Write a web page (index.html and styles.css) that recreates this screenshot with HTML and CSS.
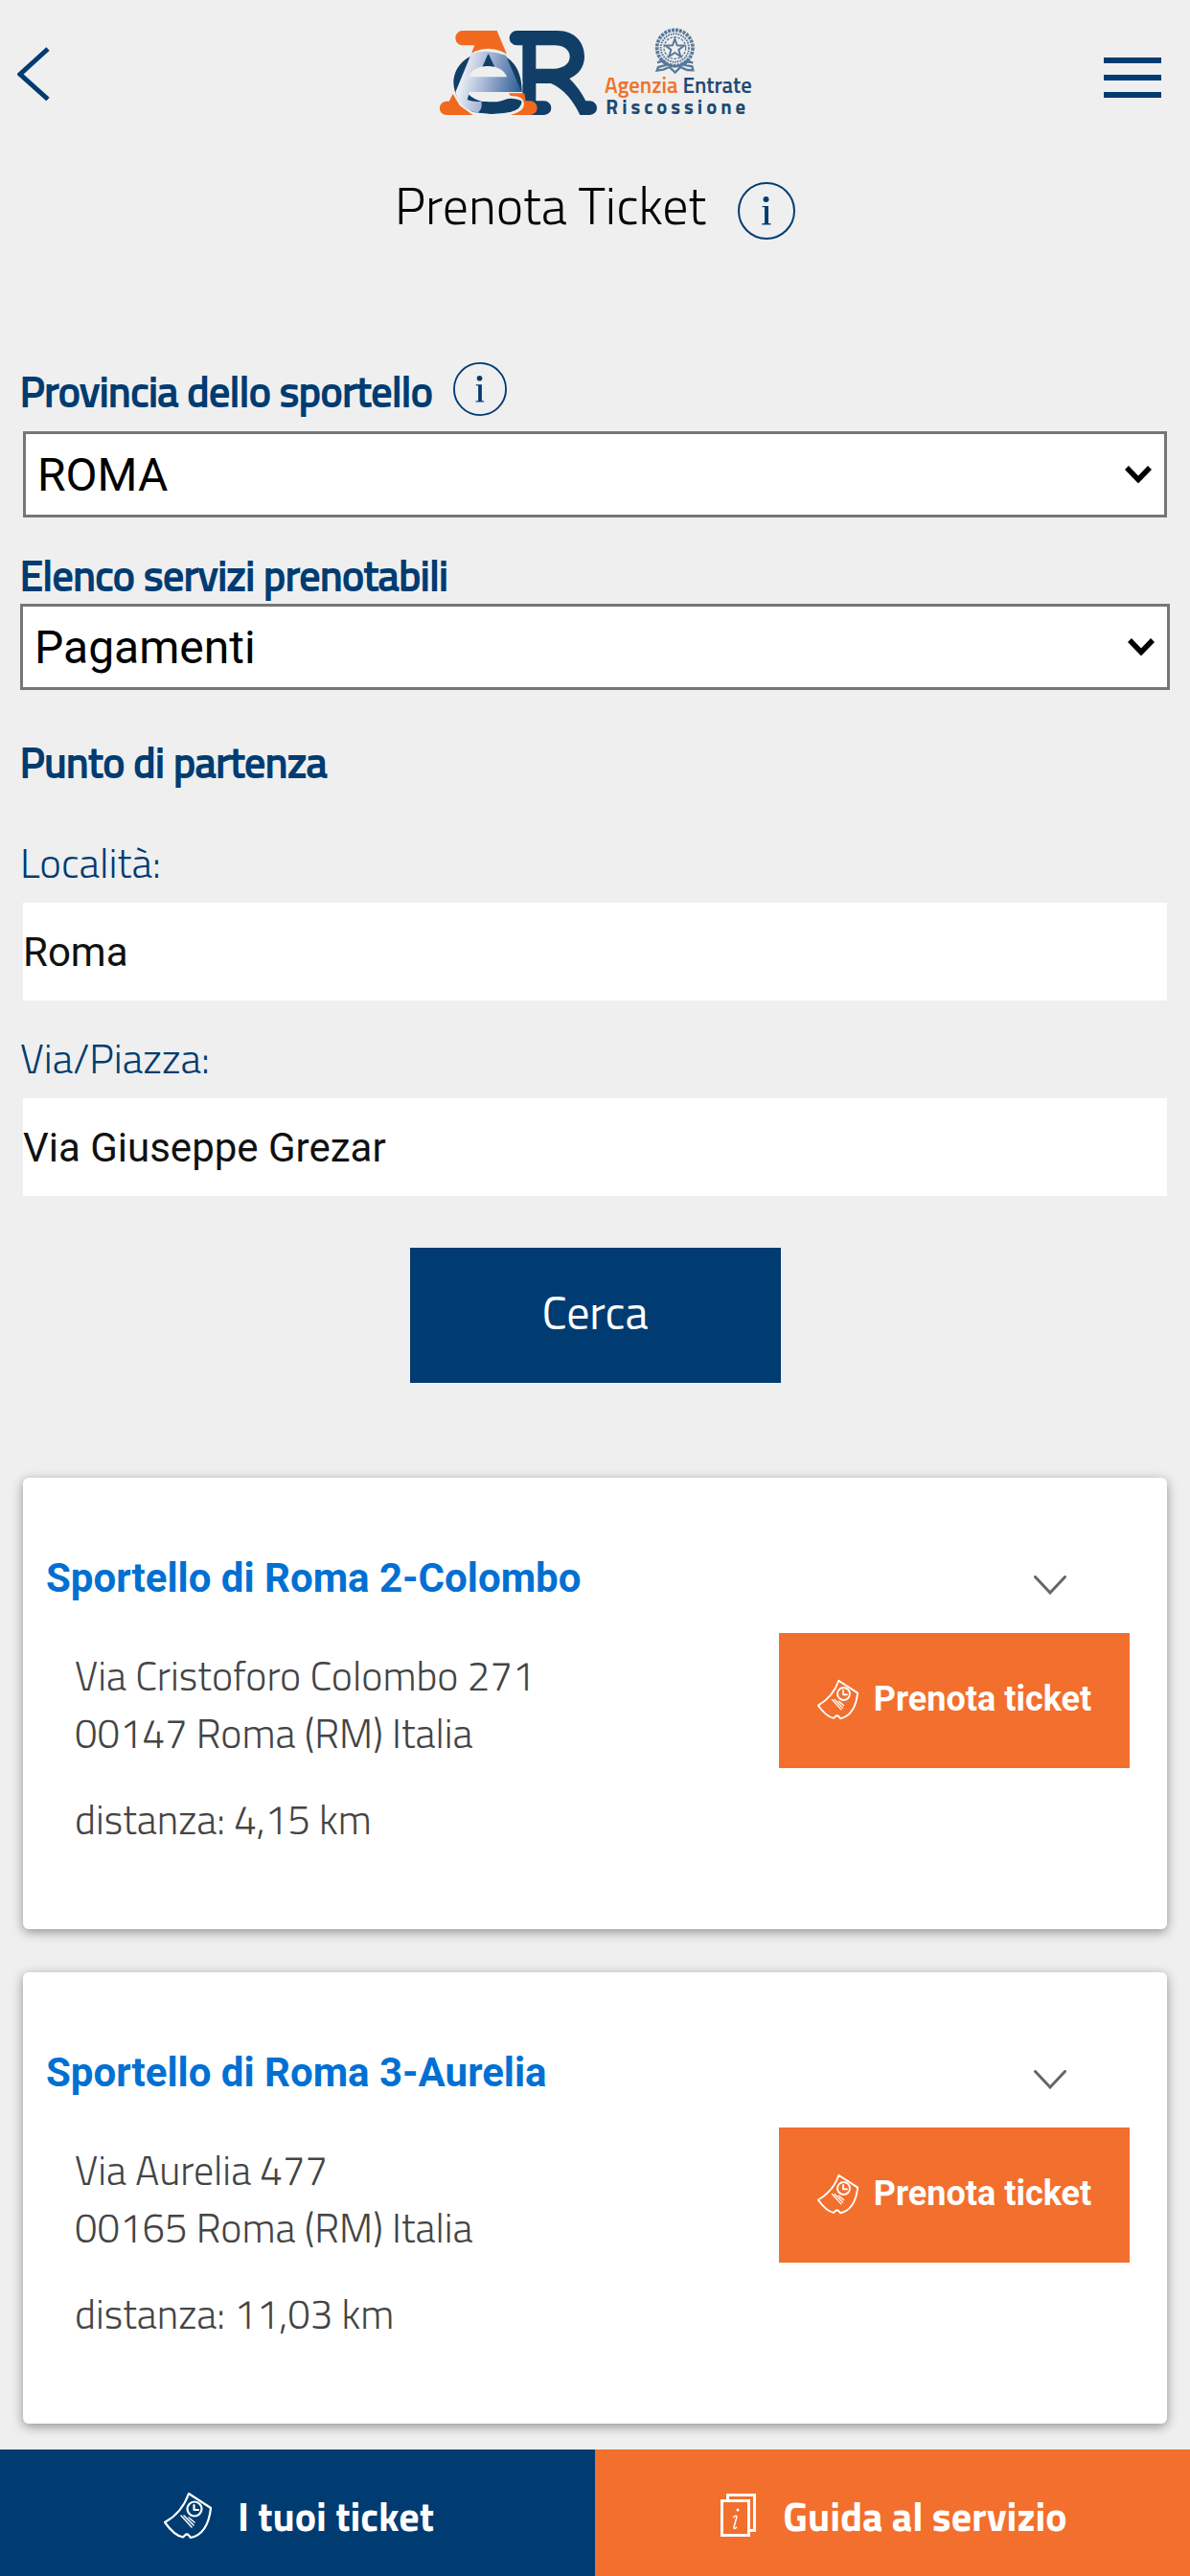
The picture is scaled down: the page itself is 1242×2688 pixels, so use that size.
FILE: index.html
```html
<!DOCTYPE html>
<html lang="it">
<head>
  <meta charset="UTF-8" />
  <meta name="viewport" content="width=device-width, initial-scale=1.0" />
  <title>Prenota Ticket</title>
  <link rel="stylesheet" href="styles.css">
</head>
<body>
  <!-- shared icons -->
  <svg class="sprite" aria-hidden="true">
    <symbol id="icon-info" viewBox="0 0 60 60">
      <circle cx="30" cy="30" r="29" fill="none" stroke="currentColor" stroke-width="2"/>
      <circle cx="29.5" cy="18" r="3" fill="currentColor"/>
      <path d="M25.5 25H32V43L34.5 43.3V44.5H25.2V43.3L28 43V26.3L25.5 26Z" fill="currentColor"/>
    </symbol>
    <symbol id="icon-ticket" viewBox="0 0 50 50">
      <g fill="none" stroke="currentColor" stroke-width="2.200" stroke-linejoin="round" stroke-linecap="round">
        <path d="M26 2L49 17Q46 44 28 48L26 45.500Q24 43.500 22 45.500L20 47.500Q11 46 1 32Q19 22 26 2Z"/>
        <circle cx="32" cy="18" r="7.500"/>
        <path d="M31.500 14V19H36"/>
        <path d="M18 25L29 37M21 25L31 35M26 27L32 32" stroke-width="1.500"/>
      </g>
    </symbol>
    <symbol id="icon-arrow" viewBox="0 0 28 18">
      <path d="M2 2L14 14.500L26 2" fill="none" stroke="currentColor" stroke-width="5.500"/>
    </symbol>
    <symbol id="icon-chevron" viewBox="0 0 34 20">
      <path d="M1.500 1.500L17 18L32.500 1.500" fill="none" stroke="currentColor" stroke-width="3" stroke-linecap="round"/>
    </symbol>
  </svg>

  <header class="top-bar">
    <a href="#" class="back-link" aria-label="Indietro">
      <svg width="34" height="60" viewBox="0 0 34 60">
        <path d="M32 6L3 32.500L32 58.500" fill="none" stroke="currentColor" stroke-width="5"/>
      </svg>
    </a>
    <svg class="logo" viewBox="57 60 972 270" role="img" aria-label="Agenzia Entrate Riscossione">
      <defs>
        <linearGradient id="logoShade" x1="0" y1="0.300" x2="1" y2="0.500">
          <stop offset="0" stop-color="#ffffff"/>
          <stop offset="0.450" stop-color="#a9b8d8"/>
          <stop offset="1" stop-color="#2f6094"/>
        </linearGradient>
      </defs>
      <!-- orange A -->
      <path d="M128 66H236L267 140Q210 112 156 137L166 112H128A22 23 0 0 1 128 66Z" fill="#f0691e"/>
      <path d="M98 264L119 300L160 330H78A21 21 0 0 1 78 287H86Z" fill="#f0691e"/>
      <!-- blue R -->
      <path d="M298 66H425C482 66 510 105 510 147C510 181 490 204 463 216Q494 246 514 286H527A22 22 0 0 1 527 330H496C475 285 447 250 405 231H358V286H384A22 22 0 0 1 384 330H330L316 290V112H298A23 23 0 0 1 298 66ZM358 112V185H418C446 182 464 170 464 147C464 126 445 112 416 112Z" fill="#103e67"/>
      <!-- e in the middle -->
      <circle cx="209" cy="229" r="107" fill="#efefef"/>
      <path d="M314 258H146Q142 286 189 287Q220 290 250 283Q286 272 314 286Q314 312 278 321Q213 333 160 320Q102 288 100 228C101 175 145 134 209 134C272 134 316 178 314 258Z" fill="#103e67"/>
      <path d="M156 137Q205 123 264 143L313 258H145L151 268Q151 280 187 286Q193 313 174 324Q118 310 106 259Z" fill="url(#logoShade)"/>
      <path d="M190 180L209 137L229 180Z" fill="#103e67"/>
      <path d="M148 211Q160 178 207 177Q254 178 267 211Z" fill="#efefef"/>
      <path d="M152 259H274V275Q252 289 222 289Q180 290 152 270Z" fill="#efefef"/>
      <path d="M148 266L143 282Q162 290 187 287Q164 281 148 266Z" fill="#103e67"/>
      <path d="M273 262H322L326 286H340A22 22 0 0 1 340 330H278Q325 316 318 291Q312 275 290 275Q278 273 273 262Z" fill="#f0691e"/>
      <path d="M273 273Q314 270 318 292Q320 318 278 325Q224 334 174 325" fill="none" stroke="#efefef" stroke-width="5"/>
      <!-- emblem -->
      <g fill="none" stroke="#58799a" stroke-width="5">
        <circle cx="793" cy="120" r="56" stroke-width="11" stroke-dasharray="9 3"/>
        <circle cx="793" cy="120" r="44" stroke-width="6" stroke-dasharray="5 3"/>
        <circle cx="793" cy="120" r="34" stroke-width="4" stroke-dasharray="8 4"/>
        <path d="M793 92L800 112L822 113L805 126L811 147L793 135L775 147L781 126L764 113L786 112Z" stroke-width="6"/>
        <path d="M738 166L756 160L764 174L741 180L737 191L757 188L776 180L794 197L811 180L831 189L850 190L847 178L824 174L832 161L850 167M758 160Q776 180 793 177Q811 180 829 160" stroke-width="7"/>
      </g>
      <text class="logo-name" x="573" y="262"><tspan class="logo-accent">Agenzia</tspan> Entrate</text>
      <text class="logo-sub" x="577" y="327">Riscossione</text>
    </svg>
    <button type="button" class="menu-button" aria-label="Menu">
      <svg width="60" height="54" viewBox="0 0 60 54">
        <path d="M0 12H60V18H0ZM0 30H60V36H0ZM0 48H60V54H0Z" fill="currentColor"/>
      </svg>
    </button>
  </header>

  <main>
    <div class="page-title">
      <h1>Prenota Ticket</h1>
      <button type="button" class="info-button" aria-label="Informazioni">
        <svg width="60" height="60"><use href="#icon-info"/></svg>
      </button>
    </div>

    <form class="search-form">
      <div class="label-row">
        <label class="heading" for="provincia">Provincia dello sportello</label>
        <button type="button" class="info-button" aria-label="Informazioni provincia">
          <svg width="56" height="56"><use href="#icon-info"/></svg>
        </button>
      </div>
      <div class="select-box inset">
        <select id="provincia">
          <option>ROMA</option>
        </select>
        <svg class="arrow" width="28" height="18"><use href="#icon-arrow"/></svg>
      </div>

      <label class="heading services-label" for="servizi">Elenco servizi prenotabili</label>
      <div class="select-box">
        <select id="servizi">
          <option>Pagamenti</option>
        </select>
        <svg class="arrow" width="28" height="18"><use href="#icon-arrow"/></svg>
      </div>

      <h2 class="heading start-heading">Punto di partenza</h2>

      <div class="input-group">
        <label for="localita">Località:</label>
        <input type="text" id="localita" value="Roma">
      </div>
      <div class="input-group">
        <label for="via">Via/Piazza:</label>
        <input type="text" id="via" value="Via Giuseppe Grezar">
      </div>

      <button type="button" class="search-button">Cerca</button>
    </form>

    <section class="results">
      <article class="card">
        <div class="card-header">
          <h3>Sportello di Roma 2-Colombo</h3>
          <button type="button" class="toggle-button" aria-label="Mostra dettagli">
            <svg width="34" height="20"><use href="#icon-chevron"/></svg>
          </button>
        </div>
        <div class="card-body">
          <div class="address">
            <p>Via Cristoforo Colombo 271<br>00147 Roma (RM) Italia</p>
            <p>distanza: 4,15 km</p>
          </div>
          <button type="button" class="ticket-button">
            <svg width="43" height="43"><use href="#icon-ticket"/></svg>
            Prenota ticket
          </button>
        </div>
      </article>

      <article class="card">
        <div class="card-header">
          <h3>Sportello di Roma 3-Aurelia</h3>
          <button type="button" class="toggle-button" aria-label="Mostra dettagli">
            <svg width="34" height="20"><use href="#icon-chevron"/></svg>
          </button>
        </div>
        <div class="card-body">
          <div class="address">
            <p>Via Aurelia 477<br>00165 Roma (RM) Italia</p>
            <p>distanza: 11,03 km</p>
          </div>
          <button type="button" class="ticket-button">
            <svg width="43" height="43"><use href="#icon-ticket"/></svg>
            Prenota ticket
          </button>
        </div>
      </article>
    </section>
  </main>

  <nav class="bottom-bar">
    <a href="#" class="my-tickets">
      <svg width="50" height="50"><use href="#icon-ticket"/></svg>
      I tuoi ticket
    </a>
    <a href="#" class="guide">
      <svg width="38" height="46" viewBox="0 0 38 46">
        <g fill="none" stroke="currentColor" stroke-width="3">
          <path d="M7.500 7V1.500H35.500V38.500H30"/>
          <rect x="1.500" y="7.500" width="28" height="36"/>
        </g>
        <circle cx="18" cy="17" r="1.500" fill="currentColor"/>
        <path d="M13 25Q16 22 17 24L14 35Q14 38 17 35" fill="none" stroke="currentColor" stroke-width="1.500"/>
      </svg>
      Guida al servizio
    </a>
  </nav>
</body>
</html>
```
FILE: styles.css
```css
* {
  box-sizing: border-box;
}
body {
  margin: 0;
  font-family: 'Titillium Web', Roboto, sans-serif;
  font-size: 42px;
  line-height: 60px;
  background-color: #efefef;
  color: #444;
  display: flex;
  flex-direction: column;
  min-height: 100vh;
}
h1, h2, h3, p {
  margin: 0;
}
button {
  font-family: inherit;
  border: none;
  padding: 0;
  background: none;
  cursor: pointer;
}
svg {
  display: block;
  flex-shrink: 0;
}
.sprite {
  width: 0;
  height: 0;
  position: absolute;
}

/* Header */
.top-bar {
  display: grid;
  grid-template-columns: 1fr auto 1fr;
  align-items: center;
  padding: 30px 30px 30px 18px;
  color: #003c71;
}
.back-link {
  color: inherit;
  justify-self: start;
}
.logo {
  width: 324px;
  height: 90px;
  margin-left: 12px;
  overflow: visible;
}
.logo-name {
  font-size: 68px;
  font-weight: 600;
  fill: #1c4a73;
}
.logo-accent { fill: #f0732e; }
.logo-sub {
  font-size: 62px;
  font-weight: 700;
  letter-spacing: 12px;
  fill: #1c4a73;
}
.menu-button {
  color: inherit;
  justify-self: end;
}

.page-title {
  display: flex;
  justify-content: center;
  gap: 33px;
  padding-top: 40px;
}
.page-title h1 {
  font-size: 54px;
  line-height: 48px;
  font-weight: 300;
  color: #000;
}
.info-button { color: #003c71; }

/* Search form */
.search-form {
  display: flex;
  flex-direction: column;
  padding: 128px 21px 0;
}
.heading {
  font-size: 43px;
  font-weight: 400;
  color: #003c71;
  -webkit-text-stroke: 2px #003c71;
}
.label-row {
  display: flex;
  gap: 21px;
  margin-bottom: 12px;
}
.label-row .info-button { height: 56px; }
.services-label { margin-top: 30px; }
.start-heading { margin: 45px 0; }

.select-box {
  display: grid;
  align-items: center;
}
.select-box.inset { margin: 0 3px; }
.select-box select, .select-box .arrow {
  grid-area: 1 / 1;
}
.select-box .arrow {
  justify-self: end;
  margin-right: 16px;
  color: #000;
  pointer-events: none;
}
select {
  appearance: none;
  width: 100%;
  height: 90px;
  padding: 0 12px;
  font-family: Roboto, sans-serif;
  font-size: 48px;
  color: #000;
  background-color: #fff;
  border: 3px solid #767676;
  border-radius: 0;
}
.input-group {
  display: flex;
  flex-direction: column;
  gap: 12px;
  margin-bottom: 30px;
}
.input-group label {
  font-size: 43px;
  font-weight: 300;
  color: #003c71;
}
input[type="text"] {
  height: 102px;
  margin: 0 3px;
  padding: 0;
  font-family: Roboto, sans-serif;
  font-size: 42px;
  color: #111;
  background-color: #fff;
  border: none;
}
.search-button {
  align-self: center;
  width: 387px;
  height: 141px;
  margin-top: 24px;
  padding-bottom: 6px;
  font-size: 48px;
  color: #fff;
  background-color: #003c71;
}

/* Results */
.results {
  display: flex;
  flex-direction: column;
  gap: 45px;
  padding: 99px 24px 27px;
}
.card {
  padding: 75px 39px 85px 24px;
  background-color: #fff;
  border-radius: 6px;
  box-shadow: 0 3px 12px rgba(0, 0, 0, 0.4);
}
.card-header {
  display: flex;
  justify-content: space-between;
  align-items: center;
  margin-bottom: 27px;
  padding-right: 66px;
}
.card-header h3 {
  font-family: Roboto, sans-serif;
  font-size: 42px;
  font-weight: 700;
  color: #0070d2;
}
.toggle-button {
  padding-top: 14px;
  color: #666;
}
.card-body {
  display: flex;
  justify-content: space-between;
  align-items: flex-start;
}
.address {
  padding: 14px 0 0 30px;
  font-weight: 300;
}
.address p + p { margin-top: 30px; }
.ticket-button {
  display: flex;
  justify-content: center;
  align-items: center;
  gap: 16px;
  width: 366px;
  height: 141px;
  padding-bottom: 3px;
  font-family: Roboto, sans-serif;
  font-size: 36px;
  font-weight: 700;
  color: #fff;
  background-color: #f36f2d;
}

/* Bottom bar */
.bottom-bar {
  display: grid;
  grid-template-columns: 1fr 1fr;
  height: 132px;
  margin-top: auto;
}
.bottom-bar a {
  display: flex;
  justify-content: center;
  align-items: center;
  gap: 27px;
  padding: 6px 0 0 3px;
  font-weight: 700;
  color: #fff;
  text-decoration: none;
}
.my-tickets { background-color: #003c71; }
.guide { background-color: #f36f2d; }
```
